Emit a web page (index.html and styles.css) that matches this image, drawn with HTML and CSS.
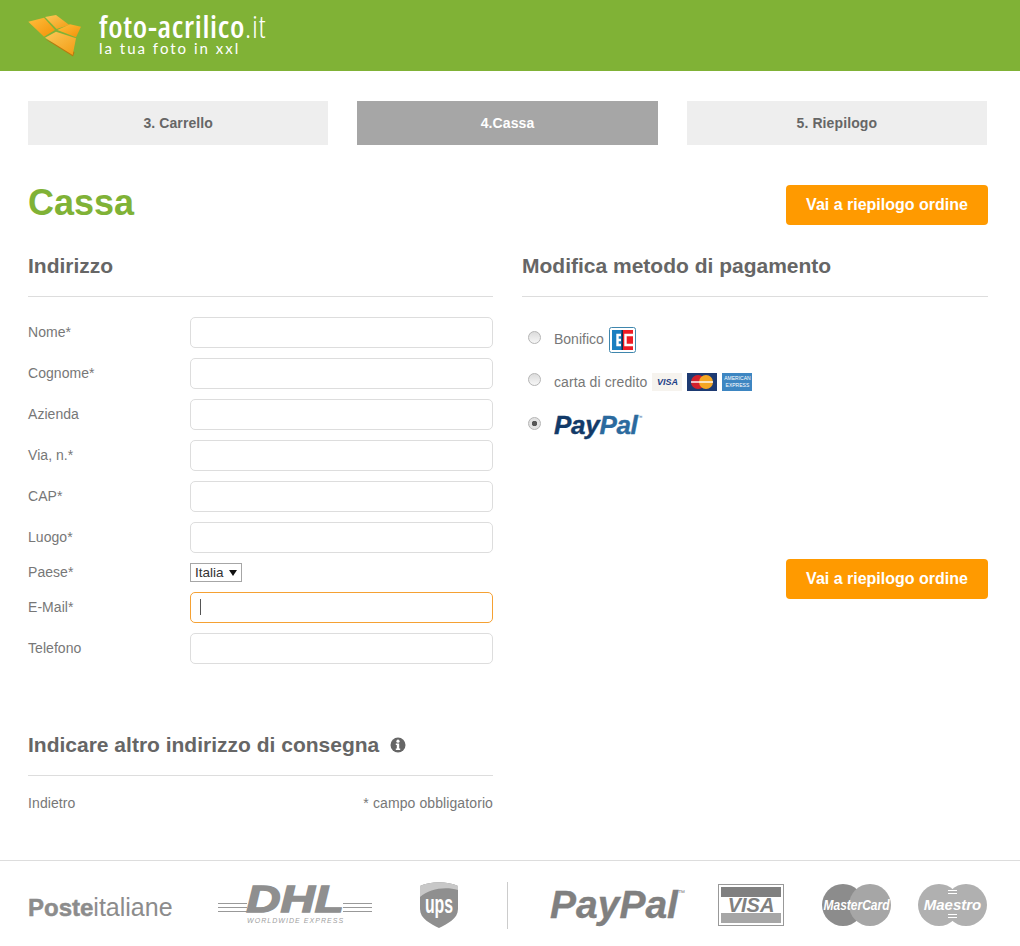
FILE: index.html
```html
<!DOCTYPE html>
<html lang="it">
<head>
    <meta charset="UTF-8">
    <meta name="viewport" content="width=device-width, initial-scale=1.0">
    <title>Cassa</title>
    <link rel="stylesheet" href="styles.css">
</head>
<body>
    <header class="topbar">
        <svg class="brand-mark" width="55" height="43" viewBox="0 0 55 43">
            <defs>
                <linearGradient id="fold" x1="0" y1="0" x2="1" y2="1">
                    <stop offset="0" stop-color="#ffbe3c"/>
                    <stop offset="1" stop-color="#f39208"/>
                </linearGradient>
                <linearGradient id="foldLow" x1="0" y1="0" x2="1" y2="1">
                    <stop offset="0" stop-color="#fcc858"/>
                    <stop offset="1" stop-color="#f29c14"/>
                </linearGradient>
            </defs>
            <polygon points="18,25 46,42.5 47.5,38" fill="#b9790f"/>
            <polygon points="1.3,7.7 17,3.7 28,16 17,22.7" fill="url(#fold)"/>
            <polygon points="18,3 29,1 42.3,11 29.7,15" fill="url(#foldLow)"/>
            <polygon points="30.3,16 43,10.3 54,12.7 49,23.3" fill="url(#fold)"/>
            <polygon points="18,23.7 29,17.7 49,24.3 45.7,41" fill="url(#foldLow)"/>
        </svg>
        <div class="brand-text">
            <div class="brand-name">foto-acrilico<span class="brand-tld">.it</span></div>
            <div class="brand-claim">la tua foto in xxl</div>
        </div>
    </header>

    <main class="page">
        <nav class="steps">
            <div class="step">3. Carrello</div>
            <div class="step step-active">4.Cassa</div>
            <div class="step">5. Riepilogo</div>
        </nav>

        <div class="title-row">
            <h1>Cassa</h1>
            <button class="btn-order">Vai a riepilogo ordine</button>
        </div>

        <div class="columns">
            <section class="col-left">
                <h2>Indirizzo</h2>
                <form class="address">
                    <div class="field"><label>Nome*</label><input type="text"></div>
                    <div class="field"><label>Cognome*</label><input type="text"></div>
                    <div class="field"><label>Azienda</label><input type="text"></div>
                    <div class="field"><label>Via, n.*</label><input type="text"></div>
                    <div class="field"><label>CAP*</label><input type="text"></div>
                    <div class="field"><label>Luogo*</label><input type="text"></div>
                    <div class="field field-select">
                        <label>Paese*</label>
                        <div class="fake-select">Italia <span class="caret"></span></div>
                    </div>
                    <div class="field"><label>E-Mail*</label><div class="fake-input focused"><span class="text-cursor"></span></div></div>
                    <div class="field"><label>Telefono</label><input type="text"></div>
                </form>

                <h2 class="delivery-title">Indicare altro indirizzo di consegna
                    <svg class="info-icon" width="16" height="16" viewBox="0 0 16 16">
                        <circle cx="8" cy="8" r="7.5" fill="#666"/>
                        <circle cx="8" cy="4.2" r="1.6" fill="#fff"/>
                        <path d="M5.8 6.6h3.4v5h1v1.4H5.8v-1.4h1v-3.6h-1z" fill="#fff"/>
                    </svg>
                </h2>
                <div class="back-row">
                    <span>Indietro</span>
                    <span>* campo obbligatorio</span>
                </div>
            </section>

            <section class="col-right">
                <h2>Modifica metodo di pagamento</h2>
                <div class="pay-option pay-bank">
                    <span class="radio"></span>
                    <span class="pay-label">Bonifico</span>
                    <svg width="27" height="26" viewBox="0 0 27 26">
                        <rect x="0.5" y="0.5" width="26" height="25" rx="2" fill="#fff" stroke="#3f86ad"/>
                        <rect x="3" y="3" width="10" height="20" fill="#1b7fc0"/>
                        <rect x="13" y="3" width="11" height="20" fill="#ee1c25"/>
                        <path d="M12 8H8.5V18H12M8.5 13H12" fill="none" stroke="#fff" stroke-width="2.4"/>
                        <path d="M24 8H16.5V18H24" fill="none" stroke="#fff" stroke-width="2.4"/>
                        <rect x="12.5" y="3" width="1.5" height="20" fill="#12304f"/>
                    </svg>
                </div>
                <div class="pay-option pay-card">
                    <span class="radio"></span>
                    <span class="pay-label">carta di credito</span>
                    <span class="card card-visa">VISA</span>
                    <svg class="card" width="30" height="18" viewBox="0 0 30 18">
                        <rect width="30" height="18" fill="#1d3a72"/>
                        <circle cx="11" cy="9" r="7" fill="#d3202c"/>
                        <circle cx="19" cy="9" r="7" fill="#f5a623"/>
                        <rect x="4" y="8" width="22" height="2" fill="#fff" opacity="0.7"/>
                    </svg>
                    <span class="card card-amex">AMERICAN EXPRESS</span>
                </div>
                <div class="pay-option pay-paypal">
                    <span class="radio radio-on"></span>
                    <span class="paypal-name"><span class="pay-a">Pay</span><span class="pay-b">Pal</span><sup class="pay-tm">™</sup></span>
                </div>
                <div class="bottom-action">
                    <button class="btn-order">Vai a riepilogo ordine</button>
                </div>
            </section>
        </div>
    </main>

    <footer class="logos">
        <div class="logo-poste"><b>Poste</b>italiane</div>
        <div class="logo-dhl">
            <span class="dhl-lines"></span>
            <div class="dhl-mid">
                <div class="dhl-name">DHL</div>
                <div class="dhl-sub">WORLDWIDE EXPRESS</div>
            </div>
            <span class="dhl-lines"></span>
        </div>
        <svg class="logo-ups" width="40" height="48" viewBox="0 0 40 48">
            <path d="M1 5C12 0 28 0 39 5V28C39 38 28 43 20 47C12 43 1 38 1 28Z" fill="#8f8f8f"/>
            <path d="M1 5C12 0 28 0 39 5V9C26 5 10 8 1 16Z" fill="#c8c8c8"/>
            <text class="ups-text" text-anchor="middle" transform="translate(20 32) scale(0.88 1.4)">ups</text>
        </svg>
        <span class="logos-divider"></span>
        <div class="logo-paypal">PayPal<sup>™</sup></div>
        <div class="logo-visa">
            <span class="visa-band"></span>
            <span class="visa-name">VISA</span>
            <span class="visa-band visa-band-low"></span>
        </div>
        <div class="logo-circles logo-mc">
            <span class="circle-a"></span><span class="circle-b"></span>
            <span class="circle-text">MasterCard</span>
        </div>
        <div class="logo-circles logo-maestro">
            <span class="circle-a"></span><span class="circle-b"></span>
            <span class="circle-text">Maestro</span>
        </div>
    </footer>
</body>
</html>
```

FILE: styles.css
```css
/* General Reset */
* {
    margin: 0;
    padding: 0;
    box-sizing: border-box;
}

body {
    font-family: 'Liberation Sans', Arial, sans-serif;
    font-size: 14px;
    color: #777;
    background: #fff;
}

/* Header */
.topbar {
    height: 71px;
    background: #80b236;
    padding: 12px 0 0 27px;
    display: flex;
    align-items: flex-start;
    gap: 17px;
}

.brand-mark {
    margin-top: 2px;
}

.brand-text {
    color: #fff;
}

.brand-name {
    font-family: 'Open Sans', sans-serif;
    font-stretch: condensed;
    font-size: 31px;
    line-height: 28px;
    font-weight: 600;
    letter-spacing: 0.7px;
}

.brand-tld {
    font-weight: 300;
}

.brand-claim {
    font-family: 'Lato', sans-serif;
    font-size: 15px;
    line-height: 16px;
    font-weight: 400;
    letter-spacing: 2px;
}

/* Page */
.page {
    padding: 30px 32px 0 28px;
    height: 789px;
}

.steps {
    display: flex;
    gap: 29px;
    padding-right: 1px;
}

.step {
    flex: 1;
    height: 44px;
    line-height: 44px;
    background: #eee;
    color: #666;
    font-weight: bold;
    text-align: center;
    letter-spacing: 0.1px;
}

.step-active {
    background: #a6a6a6;
    color: #fff;
}

.title-row {
    display: flex;
    justify-content: space-between;
    align-items: center;
    margin-top: 40px;
    height: 40px;
}

h1 {
    font-size: 36px;
    line-height: 36px;
    color: #80b236;
    margin-bottom: 4px;
}

.btn-order {
    width: 202px;
    height: 40px;
    border: none;
    border-radius: 4px;
    background: #ff9a00;
    color: #fff;
    font-family: inherit;
    font-size: 16px;
    font-weight: bold;
}

.columns {
    display: flex;
    gap: 29px;
    margin-top: 20px;
}

.col-left {
    width: 465px;
}

.col-right {
    width: 466px;
}

h2 {
    font-size: 21px;
    line-height: 41px;
    height: 52px;
    color: #666;
    font-weight: bold;
    border-bottom: 1px solid #ddd;
}

/* Address form */
.address {
    padding-top: 20px;
    display: flex;
    flex-direction: column;
    gap: 10px;
}

.field {
    display: flex;
    align-items: center;
    height: 31px;
}

.field label {
    width: 162px;
    margin-top: -2px;
    letter-spacing: 0.05px;
}

.field input,
.fake-input {
    width: 303px;
    height: 31px;
    border: 1px solid #ddd;
    border-radius: 5px;
    background: #fff;
}

.fake-input.focused {
    border-color: #f5a133;
    padding: 6px 0 0 9px;
}

.text-cursor {
    display: block;
    width: 1px;
    height: 16px;
    background: #555;
}

.field-select {
    height: 19px;
}

.fake-select {
    width: 52px;
    height: 19px;
    border: 1px solid #a6a6a6;
    color: #333;
    font-size: 13.5px;
    line-height: 17px;
    padding-left: 4px;
    display: flex;
    align-items: center;
    gap: 5px;
}

.caret {
    width: 0;
    height: 0;
    border-left: 4px solid transparent;
    border-right: 4px solid transparent;
    border-top: 6px solid #111;
}

.delivery-title {
    margin-top: 60px;
    height: 52px;
    display: block;
}

.info-icon {
    margin-left: 5px;
    vertical-align: -1px;
}

.back-row {
    display: flex;
    justify-content: space-between;
    margin-top: 19px;
    letter-spacing: 0.1px;
}

/* Payment */
.pay-option {
    display: flex;
    align-items: center;
}

.radio {
    width: 13px;
    height: 13px;
    border-radius: 50%;
    border: 1px solid #b5b5b5;
    background: linear-gradient(#dcdcdc, #f6f6f6);
    margin: 0 13px 0 6px;
    position: relative;
    top: -3px;
}

.radio-on {
    background: radial-gradient(circle, #555 0, #555 2.5px, #e2e2e2 3px);
    top: -2px;
}

.pay-bank {
    margin-top: 30px;
    height: 26px;
}

.pay-bank .pay-label {
    margin-top: -2px;
    letter-spacing: 0;
}

.pay-label {
    margin-right: 5px;
    letter-spacing: 0.1px;
}

.pay-card {
    margin-top: 20px;
    height: 18px;
}

.card {
    width: 30px;
    height: 18px;
    margin-right: 5px;
    flex: none;
}

.card-visa {
    background: #f6f3ee;
    color: #1d3f86;
    font-size: 9px;
    font-weight: bold;
    font-style: italic;
    line-height: 18px;
    text-align: center;
}

.card-amex {
    background: #3d86c2;
    color: #fff;
    font-size: 5px;
    line-height: 7px;
    text-align: center;
    padding-top: 2px;
}

.pay-paypal {
    margin-top: 21px;
    height: 26px;
}

.paypal-name {
    font-size: 26px;
    font-weight: bold;
    font-style: italic;
    letter-spacing: -0.3px;
    -webkit-text-stroke: 0.4px currentColor;
}

.pay-a {
    color: #123a68;
}

.pay-b {
    color: #2b6a9e;
}

.pay-tm {
    font-size: 5px;
    font-weight: normal;
    font-style: normal;
    color: #2b6a9e;
    vertical-align: 15px;
    line-height: 0;
    -webkit-text-stroke: 0;
}

.bottom-action {
    display: flex;
    justify-content: flex-end;
    margin-top: 121px;
}

/* Footer logos */
.logos {
    height: 86px;
    border-top: 1px solid #ddd;
    padding: 19px 0 16px 28px;
    display: flex;
    align-items: center;
}

.logo-poste {
    width: 144px;
    margin: 5px 46px 0 0;
    font-size: 25px;
    color: #8c8c8c;
    white-space: nowrap;
}

.logo-poste b {
    font-size: 24px;
    -webkit-text-stroke: 0.5px currentColor;
}

.logo-dhl {
    width: 154px;
    margin-right: 47px;
    display: flex;
    align-items: flex-start;
    color: #8f8f8f;
}

.dhl-lines {
    flex: 1;
    height: 9px;
    margin-top: 18px;
    background: repeating-linear-gradient(#999 0, #999 1px, #fff 1px, #fff 4px);
}

.dhl-mid {
    width: 96px;
    text-align: center;
}

.dhl-name {
    font-size: 36px;
    line-height: 29px;
    font-weight: bold;
    font-style: italic;
    transform: scaleX(1.32);
    -webkit-text-stroke: 1.4px currentColor;
}

.dhl-sub {
    font-size: 7px;
    line-height: 10px;
    margin-top: 2px;
    font-style: italic;
    letter-spacing: 1.05px;
    white-space: nowrap;
    color: #a0a0a0;
}

.logo-ups {
    margin-right: 48px;
}

.ups-text {
    font-family: 'Liberation Sans', sans-serif;
    font-size: 18px;
    font-weight: bold;
    fill: #fff;
}

.logos-divider {
    width: 1px;
    height: 47px;
    background: #ccc;
    margin-right: 42px;
}

.logo-paypal {
    width: 135px;
    margin-right: 33px;
    font-size: 39px;
    font-weight: bold;
    font-style: italic;
    color: #808080;
    white-space: nowrap;
    -webkit-text-stroke: 0.4px currentColor;
}

.logo-paypal sup {
    font-size: 7px;
    font-weight: normal;
    font-style: normal;
    vertical-align: 23px;
    line-height: 0;
    -webkit-text-stroke: 0;
}

.logo-visa {
    width: 66px;
    height: 42px;
    margin-right: 38px;
    border: 1px solid #999;
    padding: 2px;
    display: flex;
    flex-direction: column;
    align-items: center;
}

.visa-band {
    display: block;
    width: 100%;
    height: 10px;
    flex: none;
    background: #808080;
}

.visa-band-low {
    background: #a6a6a6;
}

.visa-name {
    height: 16px;
    line-height: 16px;
    font-size: 20px;
    font-weight: bold;
    font-style: italic;
    color: #808080;
}

.logo-circles {
    position: relative;
    height: 42px;
    display: flex;
    flex: none;
}

.logo-circles span {
    display: block;
}

.circle-a,
.circle-b {
    width: 42px;
    height: 42px;
    border-radius: 50%;
}

.circle-b {
    margin-left: -15px;
}

.circle-text {
    position: absolute;
    left: -8px;
    right: -8px;
    top: 13px;
    text-align: center;
    color: #fff;
    font-weight: bold;
    font-style: italic;
    line-height: 16px;
    white-space: nowrap;
}

.logo-mc {
    width: 69px;
    margin-right: 27px;
}

.logo-mc .circle-a {
    background: #8c8c8c;
}

.logo-mc .circle-b {
    background: #a6a6a6;
}

.logo-mc .circle-text {
    font-size: 15px;
    transform: scaleX(0.8);
}

.logo-maestro {
    width: 69px;
}

.logo-maestro .circle-a,
.logo-maestro .circle-b {
    background: #b0b0b0;
}

/* the short white bars above and below the Maestro text */
.logo-maestro::before,
.logo-maestro::after {
    content: "";
    position: absolute;
    left: 30px;
    width: 9px;
    height: 6px;
    background: repeating-linear-gradient(#fff 0, #fff 1px, transparent 1px, transparent 3px);
}

.logo-maestro::before {
    top: 6px;
}

.logo-maestro::after {
    top: 30px;
}

.logo-maestro .circle-text {
    font-size: 15px;
}
```
